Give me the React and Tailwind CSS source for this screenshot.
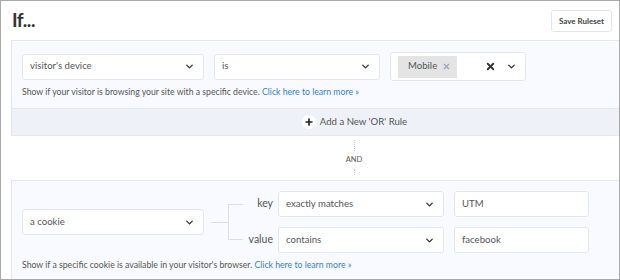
import React from 'react';
import { ChevronDown, X, Plus } from 'lucide-react';

const font = { fontFamily: 'Lato, "Open Sans", sans-serif' };

const Select = ({ label, className }) => (
  <div className={`flex items-center justify-between bg-white border border-[#e2e7ef] rounded-[3px] pl-[7px] pr-[8px] text-[9.6px] text-[#555] ${className}`}>
    <span>{label}</span>
    <ChevronDown size={11} strokeWidth={3} className="text-[#333]" />
  </div>
);

const Help = ({ text }) => (
  <p className="text-[8.7px] text-[#555] leading-[10px]">
    {text} <span className="text-[#2f7fd8]">Click here to learn more »</span>
  </p>
);

export default function App() {
  return (
    <div className="w-[620px] h-[280px] overflow-hidden bg-white border border-[#a9a9a9] flex flex-col" style={font}>
      {/* header */}
      <div className="flex items-center justify-between pl-[11px] pr-[7px] h-[39px]">
        <h1 className="text-[19px] font-bold text-[#333] tracking-tight">If...</h1>
        <button className="h-[22px] px-[7px] border border-[#e2e6ec] rounded-[3px] text-[8px] font-bold text-[#444] bg-white">
          Save Ruleset
        </button>
      </div>

      {/* device rule */}
      <div className="ml-[10px] border-t border-l border-[#e3e8f0] bg-[#f8faff]">
        <div className="px-[10px] pt-[11px] pb-[11px] flex flex-col gap-[6px]">
          <div className="flex items-center gap-[10px] h-[29px]">
            <Select label="visitor's device" className="w-[182px] h-[26px]" />
            <Select label="is" className="w-[166px] h-[26px]" />
            <div className="w-[136px] h-[29px] flex items-center bg-white border border-[#e2e7ef] rounded-[3px] pl-[7px] pr-[8px]">
              <div className="h-[22px] w-[59px] bg-[#e4e4e4] flex items-center gap-[5px] pl-[10px] text-[9.6px] text-[#555]">
                Mobile <X size={9} strokeWidth={3} className="text-[#9aa3b5]" />
              </div>
              <X size={11} strokeWidth={4} className="ml-auto text-[#333]" />
              <ChevronDown size={11} strokeWidth={3} className="ml-[10px] text-[#333]" />
            </div>
          </div>
          <Help text="Show if your visitor is browsing your site with a specific device." />
        </div>
        <div className="h-[28px] pl-[78px] bg-[#eef2f8] border-t border-b border-[#e3e8f0] flex items-center justify-center gap-[4px] text-[9.6px] text-[#555]">
          <span className="w-[14px] h-[14px] rounded-full bg-white flex items-center justify-center">
            <Plus size={10} strokeWidth={4} className="text-[#222]" />
          </span>
          Add a New 'OR' Rule
        </div>
      </div>

      {/* AND connector */}
      <div className="h-[44px] flex flex-col items-center justify-between pt-[4px] pb-[5px] ml-[88px]">
        <div className="h-[11px] border-l border-dotted border-[#c5c9d0]" />
        <span className="text-[7.5px] text-[#555] leading-none">AND</span>
        <div className="h-[6px] border-l border-dotted border-[#c5c9d0]" />
      </div>

      {/* cookie rule */}
      <div className="ml-[10px] flex-1 border-t border-l border-[#e3e8f0] bg-[#f8faff] px-[10px] pt-[10px]">
        <div className="flex items-center">
          <Select label="a cookie" className="w-[182px] h-[26px]" />
          <div className="w-[17px] ml-[7px] border-t border-[#d9dfe8]" />
          <div className="h-[36px] w-[15px] border-t border-b border-l border-[#d9dfe8]" />
          <div className="flex flex-col gap-[10px]">
            <div className="flex items-center">
              <span className="w-[30px] text-right text-[10.5px] text-[#555] mr-[5px]">key</span>
              <Select label="exactly matches" className="w-[166px] h-[26px]" />
              <div className="ml-[10px] w-[135px] h-[26px] bg-white border border-[#e2e7ef] rounded-[3px] px-[7px] flex items-center text-[9.6px] text-[#555]">UTM</div>
            </div>
            <div className="flex items-center">
              <span className="w-[30px] text-right text-[10.5px] text-[#555] mr-[5px]">value</span>
              <Select label="contains" className="w-[166px] h-[26px]" />
              <div className="ml-[10px] w-[135px] h-[26px] bg-white border border-[#e2e7ef] rounded-[3px] px-[7px] flex items-center text-[9.6px] text-[#555]">facebook</div>
            </div>
          </div>
        </div>
        <div className="mt-[7px]">
          <Help text="Show if a specific cookie is available in your visitor's browser." />
        </div>
      </div>
    </div>
  );
}
